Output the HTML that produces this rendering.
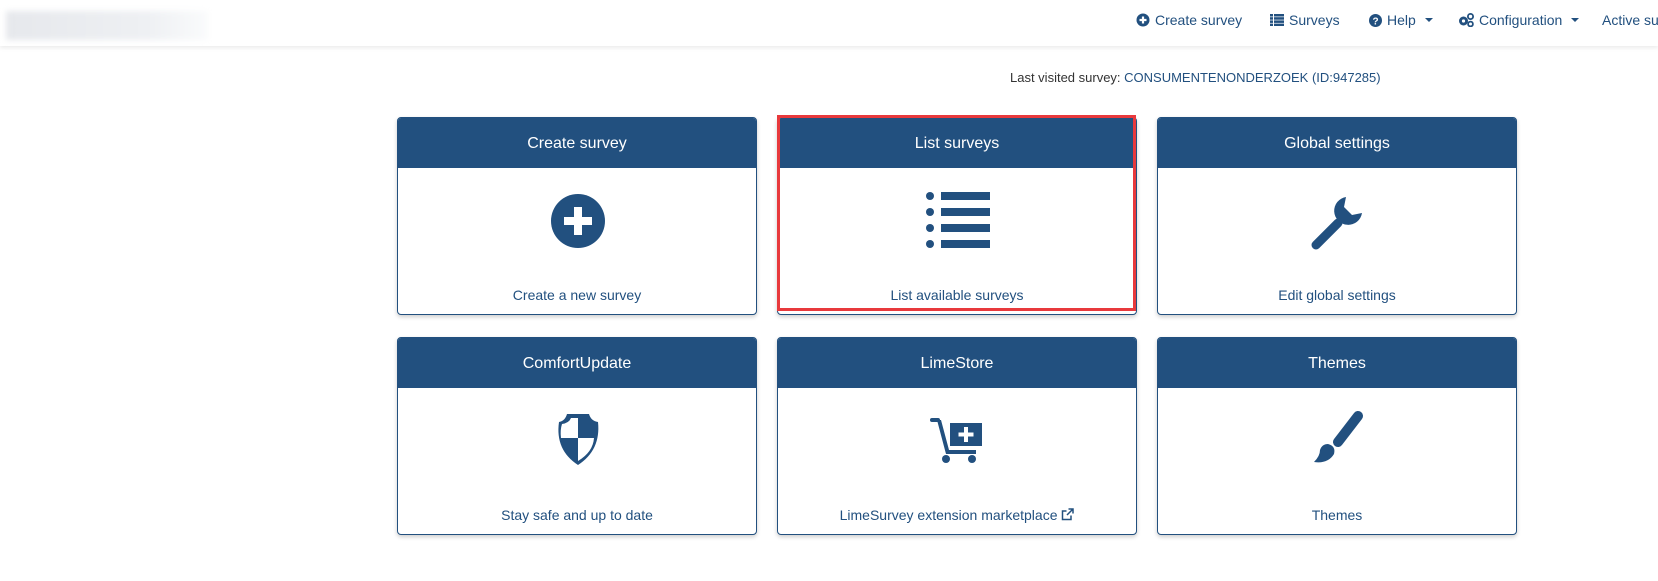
<!DOCTYPE html>
<html><head><meta charset="utf-8"><style>
*{box-sizing:border-box;margin:0;padding:0}
body{width:1658px;height:581px;background:#fff;font-family:"Liberation Sans",Arial,sans-serif;position:relative;overflow:hidden;color:#333}
.nav{position:absolute;left:0;top:0;width:1658px;height:46px;background:#fff;box-shadow:0 2px 4px rgba(0,0,0,0.08)}
.logo{position:absolute;left:6px;top:11px;width:202px;height:29px;background:linear-gradient(90deg,#e6e8ec,#eef0f3 70%,#fafbfc);filter:blur(3px)}
.ni{position:absolute;top:12px;font-size:14px;color:#22507f;white-space:nowrap;display:flex;align-items:center;gap:5px}
.caret{display:inline-block;width:0;height:0;border-left:4px solid transparent;border-right:4px solid transparent;border-top:4px solid #22507f;margin-left:4px}
.lv{position:absolute;left:1010px;top:70px;font-size:13px;color:#333}
.lv span{color:#22507f}
.card{position:absolute;width:360px;height:198px;border:1px solid #22507f;border-radius:4px;background:#fff;box-shadow:0 2px 4px rgba(0,0,0,0.2);overflow:hidden}
.card .h{height:50px;background:#22507f;color:#fff;font-size:16px;text-align:center;line-height:52px}
.card .f{position:absolute;left:0;right:0;top:169px;text-align:center;font-size:14px;color:#22507f}
.card svg{position:absolute}
.red{position:absolute;left:777px;top:115px;width:359px;height:196px;border:3px solid #e8393c}
</style></head><body>
<div class="nav"><div class="logo"></div>
<div class="ni" style="left:1136px"><svg width="14" height="14" viewBox="0 0 14 14"><circle cx="7" cy="7" r="6.5" fill="#22507f"/><path d="M7 3.5v7M3.5 7h7" stroke="#fff" stroke-width="2.2"/></svg>Create survey</div>
<div class="ni" style="left:1270px"><svg width="14" height="12" viewBox="0 0 14 12"><g fill="#22507f"><rect x="0" y="0" width="3" height="2.5"/><rect x="4" y="0" width="10" height="2.5"/><rect x="0" y="3.2" width="3" height="2.5"/><rect x="4" y="3.2" width="10" height="2.5"/><rect x="0" y="6.4" width="3" height="2.5"/><rect x="4" y="6.4" width="10" height="2.5"/><rect x="0" y="9.6" width="3" height="2.4"/><rect x="4" y="9.6" width="10" height="2.4"/></g></svg>Surveys</div>
<div class="ni" style="left:1369px"><svg width="13" height="13" viewBox="0 0 13 13"><circle cx="6.5" cy="6.5" r="6.5" fill="#22507f"/><text x="6.5" y="10.5" font-size="10" font-weight="bold" fill="#fff" text-anchor="middle" font-family="Liberation Sans">?</text></svg>Help<span class="caret"></span></div>
<div class="ni" style="left:1458px"><svg width="16" height="14" viewBox="0 0 16 14"><circle cx="5.5" cy="8" r="4.5" fill="#22507f"/><circle cx="5.5" cy="8" r="1.6" fill="#fff"/><circle cx="12.5" cy="3.5" r="2.6" fill="none" stroke="#22507f" stroke-width="1.8"/><circle cx="12.5" cy="11" r="2.4" fill="none" stroke="#22507f" stroke-width="1.8"/></svg>Configuration<span class="caret"></span></div>
<div class="ni" style="left:1602px">Active surveys</div>
</div>
<div class="lv">Last visited survey: <span>CONSUMENTENONDERZOEK (ID:947285)</span></div>

<div class="card" style="left:397px;top:117px"><div class="h">Create survey</div>
<svg style="left:152px;top:75px" width="56" height="56" viewBox="0 0 56 56"><circle cx="28" cy="28" r="27" fill="#22507f"/><path d="M28 14v28M14 28h28" stroke="#fff" stroke-width="8"/></svg>
<div class="f">Create a new survey</div></div>

<div class="card" style="left:777px;top:117px"><div class="h">List surveys</div>
<svg style="left:146px;top:72px" width="68" height="60" viewBox="0 0 68 60"><g fill="#22507f"><circle cx="6" cy="6" r="4"/><circle cx="6" cy="22" r="4"/><circle cx="6" cy="38" r="4"/><circle cx="6" cy="54" r="4"/><rect x="17" y="2" width="49" height="8"/><rect x="17" y="18" width="49" height="8"/><rect x="17" y="34" width="49" height="8"/><rect x="17" y="50" width="49" height="8"/></g></svg>
<div class="f">List available surveys</div></div>

<div class="card" style="left:1157px;top:117px"><div class="h">Global settings</div>
<svg style="left:150px;top:77px" width="56" height="56" viewBox="0 0 56 56"><path d="M8 50 L30 28" stroke="#22507f" stroke-width="9" stroke-linecap="round"/><path d="M38 2 A14 14 0 1 0 54 18 L44 20 L36 12 Z" fill="#22507f"/></svg>
<div class="f">Edit global settings</div></div>

<div class="card" style="left:397px;top:337px"><div class="h">ComfortUpdate</div>
<svg style="left:157px;top:74px" width="46" height="54" viewBox="0 0 46 54"><path d="M4 10 Q10 9 12 2 L34 2 Q36 9 43 10 Q46 38 23 53 Q0 38 4 10Z" fill="#22507f"/><path d="M23 6 L23 26 L6 26 Q5 18 7 12 Q14 11 16 6Z" fill="#fff"/><path d="M23 26 L39 26 Q38 40 23 49Z" fill="#fff"/></svg>
<div class="f">Stay safe and up to date</div></div>

<div class="card" style="left:777px;top:337px"><div class="h">LimeStore</div>
<svg style="left:152px;top:80px" width="54" height="46" viewBox="0 0 54 46"><g fill="#22507f"><rect x="0" y="0" width="10" height="4" rx="2"/><path d="M7 2 L16 36 L46 36 L46 32 L19 32 L11 2Z"/><rect x="20" y="5" width="32" height="23"/><circle cx="16" cy="41" r="4"/><circle cx="42" cy="41" r="4"/></g><path d="M36 9v15M28.5 16.5h15" stroke="#fff" stroke-width="4"/></svg>
<div class="f">LimeSurvey extension marketplace <svg width="13" height="13" viewBox="0 0 13 13" style="position:relative;vertical-align:-1px"><path d="M10 7.5v4H1.5V3h4" fill="none" stroke="#22507f" stroke-width="1.5"/><path d="M7.5 1h4.5v4.5M12 1L6 7" fill="none" stroke="#22507f" stroke-width="1.5"/></svg></div></div>

<div class="card" style="left:1157px;top:337px"><div class="h">Themes</div>
<svg style="left:150px;top:72px" width="56" height="58" viewBox="0 0 56 58"><path d="M50 6 L30 32" stroke="#22507f" stroke-width="10" stroke-linecap="round"/><path d="M20 34 Q28 36 26 44 Q20 54 6 52 Q12 46 12 40 Q14 34 20 34Z" fill="#22507f"/></svg>
<div class="f">Themes</div></div>

<div class="red"></div>
</body></html>
